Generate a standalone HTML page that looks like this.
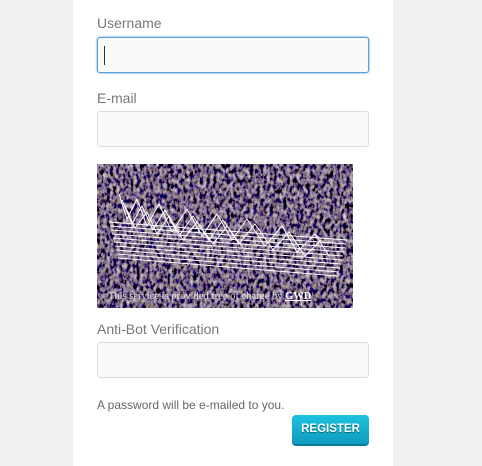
<!DOCTYPE html>
<html><head><style>
body{margin:0;width:482px;height:466px;background:#f1f1f1;font-family:"Liberation Sans",sans-serif;position:relative;overflow:hidden}
.card{position:absolute;left:73px;top:0;width:320px;height:466px;background:#fff}
label{position:absolute;left:97px;font-size:14px;color:#777}
.in{position:absolute;left:97px;width:270px;height:34px;border:1px solid #ddd;border-radius:3px;background:#fafafa}
.focus{border-color:#5b9dd9;box-shadow:0 0 2px rgba(30,140,190,.8)}
.btn{position:absolute;left:292px;top:415px;width:77px;height:31px;border-radius:4px;background:linear-gradient(#1cc3e0,#0f9bbd);border-bottom:2px solid #0a7a99;box-sizing:border-box;color:#fff;font-size:11.5px;font-weight:bold;text-align:center;line-height:29px;text-shadow:0 1px 1px #066}
</style></head><body>
<div class="card"></div>
<label style="top:15px">Username</label>
<div class="in focus" style="top:37px"><div style="position:absolute;left:6px;top:8px;width:1px;height:19px;background:#333"></div></div>
<label style="top:90px">E-mail</label>
<div class="in" style="top:111px"></div>
<svg style="position:absolute;left:97px;top:164px" width="256" height="144">
<filter id="n" x="0" y="0" width="100%" height="100%"><feTurbulence type="fractalNoise" baseFrequency="0.3 0.2" numOctaves="3" seed="5"/><feColorMatrix type="matrix" values="0.9 0.9 0 0 -0.72  0.85 0.85 0 0 -0.72  0.7 0.7 0.4 0 -0.68  0 0 0 0 1"/></filter>
<rect width="256" height="144" fill="#5e5870"/>
<rect width="256" height="144" filter="url(#n)"/>
<g stroke="#fff" stroke-width="1" fill="none">
<path d="M12 58 L250 76 M13 62 L249 80 M14 66 L248 84 M15 70 L247 88 M16 74 L246 92 M17 78 L245 96 M18 82 L244 100 M19 86 L243 104 M20 90 L242 108 M21 94 L240 112"/>
<path d="M22 30 L30 55 L40 35 L50 62 L62 40 L75 68 L90 45 L105 72 L120 50 L135 76 L150 55 L168 82 L185 62 L200 88 L218 70 L232 92 M25 36 L35 60 L45 42 L56 66 L68 46 L82 72 L96 52 L112 76 L126 56 L142 80 L158 60 L176 86 L192 68 L208 92 L224 76 M28 42 L38 64 L50 48 L60 70 L72 52 L86 76 L100 58 L116 80 L130 62 L146 84"/>
</g>
<text x="11" y="135" font-family="Liberation Serif" font-size="10.5" fill="#ddd">This service is provided free of charge by <tspan font-weight="bold" fill="#fff" text-decoration="underline">GWD</tspan></text>
</svg>
<label style="top:321px">Anti-Bot Verification</label>
<div class="in" style="top:342px"></div>
<div style="position:absolute;left:97px;top:398px;font-size:12px;color:#666">A password will be e-mailed to you.</div>
<div class="btn">REGISTER</div>
</body></html>
